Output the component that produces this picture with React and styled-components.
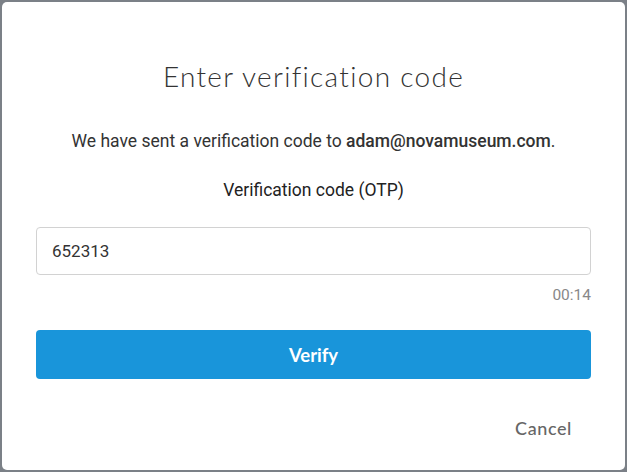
import styled, { createGlobalStyle } from 'styled-components';

const GlobalStyle = createGlobalStyle`
  html, body {
    margin: 0;
    padding: 0;
    background: #7b8087;
  }
  #root {
    min-height: 100vh;
  }
`;

const Backdrop = styled.div`
  height: 472px;
  padding: 2px;
  box-sizing: border-box;
  display: flex;
`;

const Modal = styled.div`
  flex: 1;
  background: #fff;
  border-radius: 5px;
  padding: 53px 34px 0;
  display: flex;
  flex-direction: column;
  color: #333;
  font-family: Roboto, 'Liberation Sans', sans-serif;
`;

const Title = styled.h1`
  margin: 0;
  text-align: center;
  font-family: Lato, 'Open Sans', sans-serif;
  font-weight: 300;
  font-size: 28px;
  letter-spacing: 1.3px;
  line-height: 42px;
  color: #333;
`;

const Message = styled.p`
  margin: 32px 0 0;
  text-align: center;
  font-size: 17.5px;
  line-height: 24px;
  color: #333;

  strong {
    font-weight: 500;
  }
`;

const Label = styled.label`
  display: block;
  margin-top: 25px;
  text-align: center;
  font-size: 17.5px;
  font-weight: 400;
  line-height: 24px;
  color: #222;
`;

const Input = styled.input`
  margin-top: 25px;
  height: 48px;
  box-sizing: border-box;
  border: 1px solid #d2d2d2;
  border-radius: 4px;
  padding: 0 0 0 15px;
  font-family: Roboto, 'Liberation Sans', sans-serif;
  font-size: 17px;
  color: #333;
  outline: none;
`;

const Timer = styled.div`
  margin-top: 12px;
  text-align: right;
  font-size: 15.5px;
  line-height: 16px;
  color: #888;
`;

const PrimaryButton = styled.button`
  margin-top: 27px;
  height: 49px;
  border: none;
  border-radius: 4px;
  background: #1995da;
  color: #fff;
  font-family: Lato, 'Open Sans', sans-serif;
  font-weight: 700;
  font-size: 18.5px;
  cursor: pointer;
`;

const Footer = styled.div`
  display: flex;
  justify-content: flex-end;
  margin-top: 38px;
  padding-right: 19px;
`;

const TextButton = styled.button`
  border: none;
  background: none;
  padding: 0;
  font-family: Lato, 'Open Sans', sans-serif;
  font-size: 18px;
  font-weight: 500;
  letter-spacing: 0.6px;
  color: #666;
  cursor: pointer;
`;

export default function App() {
  return (
    <>
      <GlobalStyle />
      <Backdrop>
        <Modal>
          <Title>Enter verification code</Title>
          <Message>
            We have sent a verification code to <strong>adam@novamuseum.com</strong>.
          </Message>
          <Label htmlFor="otp">Verification code (OTP)</Label>
          <Input id="otp" defaultValue="652313" />
          <Timer>00:14</Timer>
          <PrimaryButton>Verify</PrimaryButton>
          <Footer>
            <TextButton>Cancel</TextButton>
          </Footer>
        </Modal>
      </Backdrop>
    </>
  );
}
